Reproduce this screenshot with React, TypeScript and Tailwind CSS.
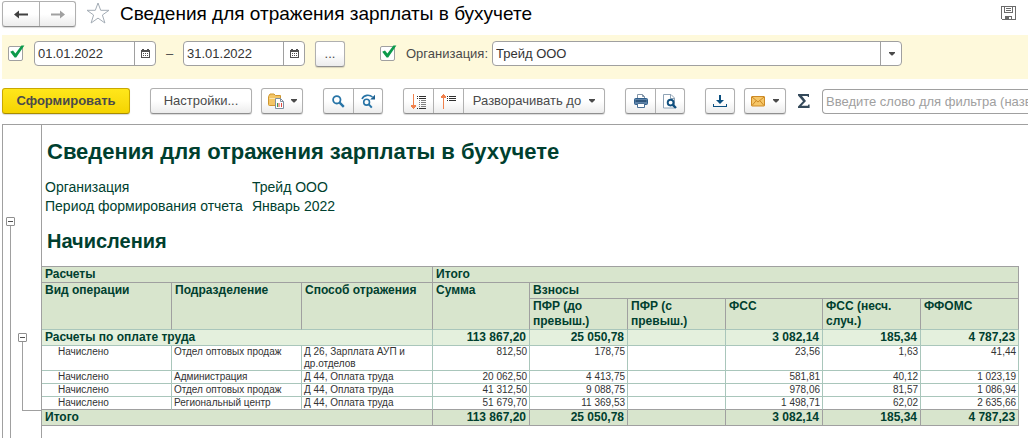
import React, { useState } from 'react';
import clsx from 'clsx';

interface DetailRow {
  operation: string;
  department: string;
  method: string;
  values: string[];
}

const totals = ['113 867,20', '25 050,78', '', '3 082,14', '185,34', '4 787,23'];

const rows: DetailRow[] = [
  {
    operation: 'Начислено',
    department: 'Отдел оптовых продаж',
    method: 'Д 26, Зарплата АУП и др.отделов',
    values: ['812,50', '178,75', '', '23,56', '1,63', '41,44'],
  },
  {
    operation: 'Начислено',
    department: 'Администрация',
    method: 'Д 44, Оплата труда',
    values: ['20 062,50', '4 413,75', '', '581,81', '40,12', '1 023,19'],
  },
  {
    operation: 'Начислено',
    department: 'Отдел оптовых продаж',
    method: 'Д 44, Оплата труда',
    values: ['41 312,50', '9 088,75', '', '978,06', '81,57', '1 086,94'],
  },
  {
    operation: 'Начислено',
    department: 'Региональный центр',
    method: 'Д 44, Оплата труда',
    values: ['51 679,70', '11 369,53', '', '1 498,71', '62,02', '2 635,66'],
  },
];

const face = 'bg-linear-to-b from-white from-50% to-[#ececec]';
const frame = 'border border-[#b0b0b0] border-b-[#8f8f8f] rounded-[3px] shadow-[0_1px_1px_rgba(0,0,0,0.15)]';

const Caret = () => (
  <svg width="6" height="4" viewBox="0 0 6 4" className="shrink-0">
    <path d="M0 0h6v1L3.5 3.5h-1L0 1z" fill="#4a4a4a" />
  </svg>
);

interface ToolButtonProps {
  title: string;
  className?: string;
  children: React.ReactNode;
}

const ToolButton: React.FC<ToolButtonProps> = ({ title, className, children }) => (
  <button
    type="button"
    title={title}
    className={clsx('flex items-center justify-center h-[26px] cursor-pointer', face, frame, className)}
  >
    {children}
  </button>
);

/* Button inside of a joined group: the frame belongs to the group */
const GroupButton: React.FC<ToolButtonProps> = ({ title, className, children }) => (
  <button
    type="button"
    title={title}
    className={clsx('flex items-center justify-center h-full cursor-pointer border-[#b0b0b0]', className)}
  >
    {children}
  </button>
);

const Group: React.FC<{ className?: string; children: React.ReactNode }> = ({ className, children }) => (
  <div className={clsx('flex shrink-0 h-[26px]', face, frame, className)}>{children}</div>
);

const CheckBox: React.FC<{ id: string; label?: string }> = ({ id, label }) => {
  const [checked, setChecked] = useState(true);
  return (
    <span className="relative block w-[15px] h-[15px] shrink-0">
      <input
        id={id}
        type="checkbox"
        aria-label={label}
        checked={checked}
        onChange={() => setChecked(!checked)}
        className="block appearance-none w-[15px] h-[15px] bg-white border border-[#a0a0a0] rounded-[2px] cursor-pointer"
      />
      {checked && (
        <svg width="18" height="15" viewBox="0 0 18 15" className="absolute left-0 -top-px pointer-events-none">
          <path d="M2.2 6.8 L5 5.6 L7.4 8.4 L13.4 0.4 L16.4 0.4 L8.2 12.6 H6.6 Z" fill="#0c9a4b" />
        </svg>
      )}
    </span>
  );
};

const CalendarIcon = () => (
  <svg width="9" height="9" viewBox="0 0 9 9" shapeRendering="crispEdges">
    <path d="M0 1h1V0h2v1h3V0h2v1h1v8H0z" fill="#505050" />
    <path d="M1 3h7v5H1z" fill="#fff" />
    <path d="M2 4h1v1H2zM4 4h1v1H4zM6 4h1v1H6zM2 6h1v1H2zM4 6h1v1H4zM6 6h1v1H6z" fill="#505050" />
  </svg>
);

const DateField: React.FC<{ label: string; value: string }> = ({ label, value }) => (
  <div className="flex shrink-0 w-[122px] h-[25px] bg-white border border-[#a0a0a0] rounded-[4px]">
    <input aria-label={label} defaultValue={value} className="w-[99px] pl-[3px] text-[13px] text-[#333] outline-none" />
    <button type="button" title="Выбрать дату" className="flex flex-1 items-center justify-center border-l border-[#a0a0a0] cursor-pointer">
      <CalendarIcon />
    </button>
  </div>
);

const Glass = () => (
  <svg width="13" height="13" viewBox="0 0 13 13">
    <circle cx="4.8" cy="4.8" r="3.7" fill="#fff" stroke="#2874a6" strokeWidth="1.8" />
    <path d="M7.6 7.6 L11.8 11.8" stroke="#2874a6" strokeWidth="2.4" />
  </svg>
);

const GlassNext = () => (
  <svg width="15" height="15" viewBox="0 0 15 15" fill="none" stroke="#2874a6">
    <path d="M1 5 C3 0.6 8.5 0.4 11.5 3" strokeWidth="1.6" />
    <path d="M14 0.8 V5.6 H9.2 Z" fill="#1b5f90" stroke="none" />
    <circle cx="5.6" cy="8.2" r="2.9" strokeWidth="1.6" />
    <path d="M7.8 10.4 L10.8 13.6" strokeWidth="2" />
  </svg>
);

const FolderIcon = () => (
  <svg width="17" height="16" viewBox="0 0 17 16">
    <path d="M0.5 3.5 L2 1 H6 L7.5 2.5 H12.5 V12.5 H1.5 Q0.5 12.5 0.5 11.5 Z" fill="#f3c565" stroke="#cf962f" />
    <path d="M1.5 5.5 H12" stroke="#fbe6ae" />
    <path d="M7.5 5.5 H12.5 L15.5 8.5 V15.5 H7.5 Z" fill="#fff" stroke="#7f8fa0" />
    <path d="M12.5 5.5 V8.5 H15.5" fill="none" stroke="#7f8fa0" />
    <path d="M9.5 10 V14" stroke="#3c9d50" />
    <path d="M11 10 V14 M13.5 10 V14" stroke="#e04a3f" />
  </svg>
);

const ExpandIcon = () => (
  <svg width="16" height="15" viewBox="0 0 16 15" shapeRendering="crispEdges">
    <path d="M2 0h1v15H2z M0 11h5v1H0z M0 12h5v1H0z M1 13h3v1H1z" fill="#f0814c" />
    <path d="M6 2h1v1H6z M8 2h7v1H8z M6 4h1v1H6z M8 4h7v1H8z M6 14h1v1H6z M8 14h7v1H8z" fill="#303030" />
    <path d="M8 6h1v1H8z M10 6h5v1h-5z M8 8h1v1H8z M10 8h5v1h-5z M8 10h1v1H8z M10 10h5v1h-5z M8 12h1v1H8z M10 12h5v1h-5z" fill="#808080" />
  </svg>
);

const CollapseIcon = () => (
  <svg width="16" height="15" viewBox="0 0 16 15" shapeRendering="crispEdges">
    <path d="M2 0h1v15H2z M1 1h3v1H1z M0 2h5v2H0z" fill="#f0814c" />
    <path d="M6 2h1v1H6z M8 2h7v1H8z M6 4h1v1H6z M8 4h7v1H8z M6 6h1v1H6z M8 6h7v1H8z" fill="#303030" />
  </svg>
);

const PrinterIcon = () => (
  <svg width="14" height="14" viewBox="0 0 14 14">
    <path d="M3.5 5 V0.5 H8.5 L10.5 2.5 V5" fill="#fff" stroke="#8295a8" />
    <path d="M8.5 0.5 V2.5 H10.5" fill="none" stroke="#8295a8" />
    <rect x="0.5" y="4.5" width="13" height="6" rx="1" fill="#5f83a8" stroke="#2f5f8c" />
    <path d="M1.5 7 H12.5" stroke="#1d4468" strokeWidth="1.4" />
    <path d="M3.5 9.5 H10.5 V13.5 H3.5 Z" fill="#fff" stroke="#4c7196" />
  </svg>
);

const PreviewIcon = () => (
  <svg width="14" height="15" viewBox="0 0 14 15">
    <path d="M0.5 0.5 H8 L11.5 4 V14 H0.5 Z" fill="#fff" stroke="#8fa3b5" />
    <path d="M7.5 0.5 V4.5 H11.5" fill="none" stroke="#8fa3b5" />
    <circle cx="7.6" cy="8.6" r="2.9" fill="#fff" stroke="#11507f" strokeWidth="1.9" />
    <path d="M9.8 10.8 L13 14" stroke="#11507f" strokeWidth="2.4" />
  </svg>
);

const DownloadIcon = () => (
  <svg width="14" height="13" viewBox="0 0 14 13" fill="#0b4f80">
    <path d="M6 0h2v5h3L7 9 3 5h3z" />
    <path d="M0 9h1v2h12V9h1v3H0z" />
  </svg>
);

const MailIcon = () => (
  <svg width="14" height="11" viewBox="0 0 14 11">
    <rect x="0.5" y="0.5" width="13" height="9.5" rx="0.5" fill="#f6c667" stroke="#cd8a26" />
    <path d="M1 1 L7 6 L13 1 M1 9.5 L5.2 4.6 M13 9.5 L8.8 4.6" fill="none" stroke="#cd8a26" />
  </svg>
);

const SumIcon = () => (
  <svg width="12" height="14" viewBox="0 0 12 14">
    <path d="M0 0 H11 V3 H10 L9.5 2 H4 L8 7 L3.4 11.7 H9.8 L10.4 10.5 H11.6 V14 H0 V12.4 L5 7.2 L0 1.4 Z" fill="#34495a" />
  </svg>
);

const SaveIcon = () => (
  <svg width="15" height="15" viewBox="0 0 15 15" fill="none" stroke="#6b6b6b" shapeRendering="crispEdges">
    <path d="M0.5 0.5 H14.5 V13.5 H1.5 L0.5 12.5 Z" />
    <path d="M3.5 0.5 V6.5 H11.5 V0.5 M5 2.5 H10 M5 4.5 H10" />
    <path d="M4 10h7v4H4z M8 11h2v2H8z" fill="#6b6b6b" fillRule="evenodd" stroke="none" />
  </svg>
);

const Arrow: React.FC<{ color: string; flip?: boolean }> = ({ color, flip }) => (
  <svg width="15" height="9" viewBox="0 0 15 9" className={clsx(flip && 'rotate-180')}>
    <path d="M0 4.5 L5 0.5 V3.5 H14 V5.5 H5 V8.5 Z" fill={color} />
  </svg>
);

const TreeToggle = () => (
  <button
    type="button"
    title="Свернуть группу"
    className="flex items-center justify-center shrink-0 w-[9px] h-[9px] bg-white border border-[#8f8f8f] rounded-[1px] cursor-pointer"
  >
    <span className="w-[5px] h-px bg-[#505050]" />
  </button>
);

const headCell = 'py-0 px-[3px] align-top text-left font-bold border-r border-b border-[#a0a0a0]';
const leafCell = 'py-0 px-[3px] align-top text-left font-bold border-r border-b border-r-[#a0a0a0] border-b-[#a9c6bb]';
const bodyCell = 'py-0 align-top border-r border-b border-[#a9c6bb]';

const ReportTable = () => (
  <table className="table-fixed border-separate border-spacing-0 w-[977px] text-[12px] leading-[15px] text-[#003f2f]">
    <colgroup>
      <col className="w-[130px]" />
      <col className="w-[130px]" />
      <col className="w-[131px]" />
      <col className="w-[97px]" />
      <col className="w-[98px]" />
      <col className="w-[98px]" />
      <col className="w-[97px]" />
      <col className="w-[98px]" />
      <col className="w-[98px]" />
    </colgroup>
    <thead className="bg-[#d8e5cd]">
      <tr>
        <th colSpan={3} className={clsx(headCell, 'border-t')}>Расчеты</th>
        <th colSpan={6} className={clsx(headCell, 'border-t')}>Итого</th>
      </tr>
      <tr>
        <th rowSpan={2} className={leafCell}>Вид операции</th>
        <th rowSpan={2} className={leafCell}>Подразделение</th>
        <th rowSpan={2} className={leafCell}>Способ отражения</th>
        <th rowSpan={2} className={leafCell}>Сумма</th>
        <th colSpan={5} className={headCell}>Взносы</th>
      </tr>
      <tr>
        <th className={leafCell}>ПФР (до превыш.)</th>
        <th className={leafCell}>ПФР (с превыш.)</th>
        <th className={leafCell}>ФСС</th>
        <th className={leafCell}>ФСС (несч. случ.)</th>
        <th className={leafCell}>ФФОМС</th>
      </tr>
    </thead>
    <tbody>
      <tr className="bg-[#e4f0dd]">
        <th colSpan={3} className={clsx(bodyCell, 'px-[3px] text-left font-bold')}>Расчеты по оплате труда</th>
        {totals.map((value, i) => (
          <td key={i} className={clsx(bodyCell, 'pr-[3px] text-right font-bold')}>{value}</td>
        ))}
      </tr>
      {rows.map((row, i) => {
        const edge = i === rows.length - 1 && 'border-b-[#a0a0a0]';
        return (
          <tr key={i} className="text-[10px] leading-[12px] text-[#333]">
            <td className={clsx(bodyCell, edge, 'pl-4')}>{row.operation}</td>
            <td className={clsx(bodyCell, edge, 'pl-[2px]')}>{row.department}</td>
            <td className={clsx(bodyCell, edge, 'pl-[2px] pr-4')}>{row.method}</td>
            {row.values.map((value, j) => (
              <td key={j} className={clsx(bodyCell, edge, 'pr-[2px] text-right')}>{value}</td>
            ))}
          </tr>
        );
      })}
    </tbody>
    <tfoot className="bg-[#d8e5cd]">
      <tr>
        <th colSpan={3} className={headCell}>Итого</th>
        {totals.map((value, i) => (
          <td key={i} className="p-0 pr-[3px] text-right font-bold border-r border-b border-[#a0a0a0]">{value}</td>
        ))}
      </tr>
    </tfoot>
  </table>
);

export default function App() {
  return (
    <div className="flex flex-col min-h-screen bg-white overflow-x-hidden font-['Liberation_Sans',Arial,sans-serif] text-[13px] text-[#4a4a4a]">
      {/* Title bar */}
      <header className="flex items-start h-[35px] pl-[2px] pr-3 pt-px">
        <Group className="w-[74px]">
          <GroupButton title="Назад" className="w-[37px] border-r">
            <Arrow color="#404040" />
          </GroupButton>
          <GroupButton title="Вперед" className="flex-1">
            <Arrow color="#a0a0a0" flip />
          </GroupButton>
        </Group>
        <button type="button" title="Добавить в избранное" className="ml-[10px] mt-px cursor-pointer">
          <svg width="24" height="22" viewBox="0 0 24 22" fill="#fff" stroke="#a3acb5">
            <path d="M12 1 L14.7 8.3 H23 L16.4 13 L18.9 21 L12 16.1 L5.1 21 L7.6 13 L1 8.3 H9.3 Z" />
          </svg>
        </button>
        <h1 className="ml-[10px] text-[19px] leading-[25px] text-black whitespace-nowrap">
          Сведения для отражения зарплаты в бухучете
        </h1>
        <button type="button" title="Сохранить" className="ml-auto mt-[5px] cursor-pointer">
          <SaveIcon />
        </button>
      </header>

      {/* Report parameters */}
      <section className="flex items-center h-[44px] ml-[2px] pl-[6px] pb-2 pt-px bg-[#fef9db]">
        <CheckBox id="period" label="Период" />
        <div className="flex items-center ml-[11px]">
          <DateField label="Начало периода" value="01.01.2022" />
          <span className="w-[27px] text-center">–</span>
          <DateField label="Конец периода" value="31.01.2022" />
        </div>
        <ToolButton title="Выбрать период" className="w-[30px] ml-[10px] mr-[35px] shrink-0">...</ToolButton>
        <CheckBox id="use-org" label="Отбор по организации" />
        <label htmlFor="org" className="ml-[11px] w-[86px] shrink-0 whitespace-nowrap">Организация:</label>
        <div className="relative w-[410px] h-[25px]">
          <select
            id="org"
            className="block appearance-none w-full h-full pl-[3px] pr-6 bg-white border border-[#a0a0a0] rounded-[4px] text-[13px] text-[#333] outline-none"
          >
            <option>Трейд ООО</option>
          </select>
          <span className="absolute inset-y-0 right-0 flex items-center justify-center w-[22px] border-l border-[#a0a0a0] pointer-events-none">
            <Caret />
          </span>
        </div>
      </section>

      {/* Toolbar */}
      <div className="flex items-center pl-[2px] py-[9px] whitespace-nowrap">
        <button
          type="button"
          className="shrink-0 w-[128px] h-[26px] bg-linear-to-b from-[#ffe71a] to-[#f5d400] border border-[#c9a800] border-b-[#a88c00] rounded-[3px] font-bold shadow-[0_1px_1px_rgba(0,0,0,0.15)] cursor-pointer"
        >
          Сформировать
        </button>
        <ToolButton title="Настройки" className="shrink-0 w-[102px] ml-5">Настройки...</ToolButton>
        <ToolButton title="Варианты отчета" className="shrink-0 w-[42px] ml-[9px] gap-[6px]">
          <FolderIcon />
          <Caret />
        </ToolButton>
        <Group className="ml-5 w-[60px]">
          <GroupButton title="Найти" className="w-[30px] border-r"><Glass /></GroupButton>
          <GroupButton title="Найти далее" className="flex-1"><GlassNext /></GroupButton>
        </Group>
        <Group className="ml-5 w-[202px]">
          <GroupButton title="Развернуть все" className="w-[30px] border-r"><ExpandIcon /></GroupButton>
          <GroupButton title="Свернуть все" className="w-[30px] border-r"><CollapseIcon /></GroupButton>
          <GroupButton title="Разворачивать до" className="flex-1 gap-2">
            Разворачивать до
            <Caret />
          </GroupButton>
        </Group>
        <Group className="ml-5 w-[60px]">
          <GroupButton title="Печать" className="w-[30px] border-r"><PrinterIcon /></GroupButton>
          <GroupButton title="Предварительный просмотр" className="flex-1"><PreviewIcon /></GroupButton>
        </Group>
        <ToolButton title="Сохранить в файл" className="shrink-0 w-[30px] ml-5"><DownloadIcon /></ToolButton>
        <ToolButton title="Отправить по почте" className="shrink-0 w-[42px] ml-[9px] gap-2">
          <MailIcon />
          <Caret />
        </ToolButton>
        <button type="button" title="Сумма" className="shrink-0 mx-3 cursor-pointer"><SumIcon /></button>
        <input
          type="text"
          aria-label="Фильтр"
          placeholder="Введите слово для фильтра (название товара, покупателя и пр.)"
          className="flex-1 min-w-0 h-[25px] pl-[3px] border border-r-0 border-[#a0a0a0] rounded-l-[4px] text-[13px] placeholder:text-[#a0a0a0] outline-none"
        />
      </div>

      {/* Report body */}
      <main className="flex flex-1 ml-[2px] mt-px border-t border-l border-[#a0a0a0]">
        <aside className="flex shrink-0 gap-[3px] w-[39px] pl-[3px] border-r border-[#a0a0a0]">
          <div className="flex flex-col items-center pt-[92px]">
            <TreeToggle />
            <span className="flex-1 w-px bg-[#a0a0a0]" />
          </div>
          <div className="flex-1 pt-[208px]">
            <TreeToggle />
            <div className="ml-1 h-[69px] border-l border-b border-[#a0a0a0]" />
          </div>
        </aside>
        <div className="flex-1 min-w-0">
          <h2 className="pl-[5px] pt-[13px] text-[22px] leading-7 font-bold text-[#003f2f] whitespace-nowrap">
            Сведения для отражения зарплаты в бухучете
          </h2>
          <dl className="grid grid-cols-[207px_1fr] pl-[3px] pt-3 text-[14px] leading-[19px] text-[#003f2f] whitespace-nowrap">
            <dt>Организация</dt>
            <dd>Трейд ООО</dd>
            <dt>Период формирования отчета</dt>
            <dd>Январь 2022</dd>
          </dl>
          <h2 className="pl-[5px] pt-3 pb-[11px] text-[20px] leading-[27px] font-bold text-[#003f2f]">Начисления</h2>
          <ReportTable />
        </div>
      </main>
    </div>
  );
}
